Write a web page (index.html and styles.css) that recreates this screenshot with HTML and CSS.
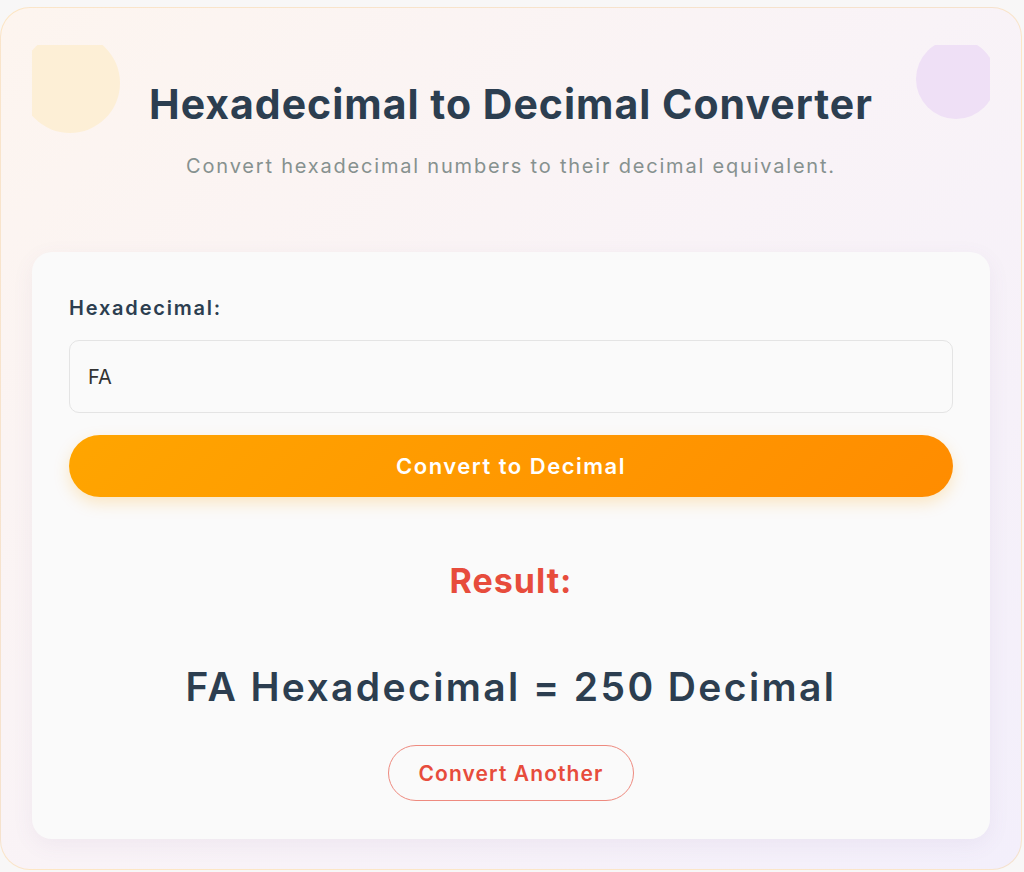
FILE: index.html
```html
<!DOCTYPE html>
<html lang="en">
<head>
    <meta charset="UTF-8">
    <meta name="viewport" content="width=device-width, initial-scale=1.0">
    <title>Hexadecimal to Decimal Converter</title>
    <link rel="stylesheet" href="styles.css">
</head>
<body>

<div class="converter">
    <div class="header">
        <h1>Hexadecimal to Decimal Converter</h1>
        <p class="subtitle">Convert hexadecimal numbers to their decimal equivalent.</p>
    </div>

    <div class="card">
        <label for="hexInput">Hexadecimal:</label>
        <input type="text" id="hexInput" value="FA">
        <button class="convert-btn">Convert to Decimal</button>

        <div class="result">
            <h2>Result:</h2>
            <div class="result-value">FA Hexadecimal = 250 Decimal</div>
            <button class="again-btn">Convert Another</button>
        </div>
    </div>
</div>

</body>
</html>
```

FILE: styles.css
```css
* {
    box-sizing: border-box;
    margin: 0;
    padding: 0;
}

body {
    background: #f8f7f7;
    font-family: 'Inter', 'Open Sans', sans-serif;
    color: #2c3e50;
    margin: 7px 2px 0 0;
}

.converter {
    height: 863px;
    padding: 37px 31px 31px;
    border: 1px solid rgba(255, 165, 0, 0.18);
    border-radius: 30px;
    background: linear-gradient(135deg, #fdf5ef 0%, #f9f3f7 50%, #f3effb 100%);
}

.header {
    position: relative;
    overflow: hidden;
    text-align: center;
    padding: 35px 0 35px;
    margin-bottom: 36px;
}

.header::before,
.header::after {
    content: "";
    position: absolute;
    border-radius: 50%;
}

.header::before {
    width: 100px;
    height: 100px;
    left: -12px;
    top: -12px;
    background: #fdefd6;
}

.header::after {
    width: 80px;
    height: 80px;
    right: -6px;
    top: -6px;
    background: #efe0f6;
}

h1 {
    position: relative;
    z-index: 1;
    font-size: 41px;
    line-height: 48px;
    font-weight: 700;
    letter-spacing: 1px;
    color: #2c3e50;
    margin-bottom: 23px;
}

.subtitle {
    font-size: 20px;
    line-height: 30px;
    letter-spacing: 1.8px;
    color: #86918f;
}

.card {
    background: #fafafa;
    border-radius: 20px;
    box-shadow: 0 6px 22px rgba(120, 90, 140, 0.07);
    padding: 43px 37px 38px;
}

label {
    display: block;
    font-size: 20px;
    line-height: 27px;
    font-weight: 600;
    letter-spacing: 1.8px;
    color: #2c3e50;
    margin-bottom: 18px;
}

input[type="text"] {
    display: block;
    width: 100%;
    height: 73px;
    padding: 0 18px;
    font-family: inherit;
    font-size: 20px;
    color: #333;
    background: #fafafa;
    border: 1px solid #e4e4e4;
    border-radius: 10px;
    outline: none;
}

.convert-btn {
    display: block;
    width: 100%;
    height: 62px;
    margin-top: 22px;
    font-family: inherit;
    font-size: 22px;
    font-weight: 600;
    letter-spacing: 1.5px;
    color: #fff;
    border: none;
    border-radius: 31px;
    cursor: pointer;
    background: linear-gradient(135deg, #ffa500, #ff8c00);
    box-shadow: 0 6px 16px rgba(255, 165, 0, 0.22);
}

.result {
    text-align: center;
    padding-top: 65px;
}

.result h2 {
    font-size: 34px;
    line-height: 38px;
    font-weight: 700;
    letter-spacing: 1px;
    color: #e74c3c;
    margin-bottom: 64px;
}

.result-value {
    font-size: 39px;
    line-height: 46px;
    font-weight: 600;
    letter-spacing: 2.4px;
    color: #2c3e50;
    margin-bottom: 35px;
}

.again-btn {
    height: 56px;
    padding: 0 29px;
    font-family: inherit;
    font-size: 21px;
    font-weight: 600;
    letter-spacing: 1.1px;
    color: #e74c3c;
    background: transparent;
    border: 1px solid #ee8a7f;
    border-radius: 28px;
    cursor: pointer;
}
```
